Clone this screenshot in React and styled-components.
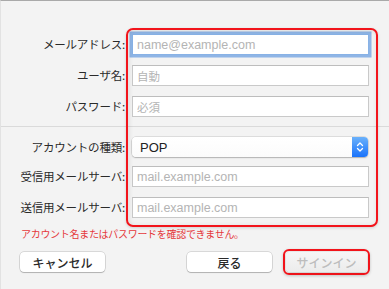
import React from 'react';
import styled, { createGlobalStyle, css } from 'styled-components';

const GlobalStyle = createGlobalStyle`
	html,
	body {
		margin: 0;
		padding: 0;
		background: #f3f3f3;
	}
	* {
		box-sizing: border-box;
	}
`;

const SheetStyles = styled.div`
	width: 389px;
	height: 289px;
	background: #f3f3f3;
	border-top: 1px solid #a9a9a9;
	border-left: 1px solid #e2e2e2;
	overflow: hidden;
	font-family: 'Noto Sans CJK JP', 'Liberation Sans', sans-serif;
	color: #2b2b2b;
`;

const Form = styled.div`
	display: grid;
	grid-template-columns: 127px 237px 1fr;
	column-gap: 5px;
	padding-top: 33px;
	margin-left: -1px;
`;

const Label = styled.div`
	grid-column: 1;
	grid-row: ${props => props.$row};
	text-align: right;
	padding-right: 2px;
	font-size: 11.5px;
	line-height: ${props => props.$h || 21}px;
	height: ${props => props.$h || 21}px;
	margin-bottom: ${props => props.$mb ?? 10}px;
	white-space: nowrap;
	color: #2a2a2a;
	letter-spacing: -0.2px;
`;

const TextInput = styled.input`
	grid-column: 2;
	grid-row: ${props => props.$row};
	height: 21px;
	width: 100%;
	margin: 0 0 ${props => props.$mb ?? 10}px;
	padding: 0 4px;
	border: 1px solid #c9c9c9;
	border-top-color: #bdbdbd;
	background: #fff;
	outline: none;
	font-size: ${props => (props.$cjk ? 11.5 : 12.5)}px;
	font-family: ${props =>
		props.$cjk ? "'Noto Sans CJK JP', sans-serif" : "'Liberation Sans', Arial, sans-serif"};
	&::placeholder {
		color: #b4b4b4;
	}
	${props =>
		props.$focused &&
		css`
			border-color: #88b2e6;
			box-shadow: 0 0 0 2.5px rgba(110, 160, 226, 0.75);
		`}
`;

const Separator = styled.div`
	grid-column: 1 / -1;
	grid-row: ${props => props.$row};
	height: 1px;
	margin: -1px 0 10px;
	background: #dadada;
`;

const Select = styled.div`
	grid-column: 2;
	grid-row: ${props => props.$row};
	height: 20px;
	margin-bottom: 9px;
	margin-right: 1px;
	display: flex;
	align-items: center;
	background: linear-gradient(#ffffff, #fbfbfb);
	border-radius: 4px;
	box-shadow: 0 0 0 0.5px rgba(0, 0, 0, 0.18), 0 1px 1.5px rgba(0, 0, 0, 0.2);
	font-family: 'Liberation Sans', Arial, sans-serif;
	font-size: 13px;
	color: #222;
	overflow: hidden;

	span {
		flex: 1;
		padding-left: 8px;
	}
`;

const Stepper = styled.div`
	width: 16px;
	height: 100%;
	display: flex;
	align-items: center;
	justify-content: center;
	background: linear-gradient(#6ab1fb, #1a73fb);
`;

const Highlight = styled.div`
	grid-column: 2;
	grid-row: 1 / 8;
	margin: -6px -9px -9px -6px;
	border: 2px solid #f2141b;
	border-radius: 7px;
	box-shadow: inset 1px 1px 5px rgba(0, 0, 0, 0.1), 0 1px 3px rgba(0, 0, 0, 0.15);
	pointer-events: none;
	z-index: 2;
`;

const ErrorText = styled.div`
	margin: 9px 0 0 20px;
	font-size: 10px;
	line-height: 14px;
	color: #e5383b;
	letter-spacing: -0.3px;
`;

const ButtonRow = styled.div`
	display: flex;
	align-items: center;
	margin-top: 8px;
	padding: 0 19px 0 19px;
`;

const Button = styled.div`
	width: ${props => props.$w || 85}px;
	height: 20px;
	display: flex;
	align-items: center;
	justify-content: center;
	background: #fff;
	border-radius: 4px;
	box-shadow: 0 0 0 0.5px rgba(0, 0, 0, 0.22), 0 1px 1px rgba(0, 0, 0, 0.18);
	font-size: 12px;
	font-weight: 500;
	color: #2a2a2a;
	${props =>
		props.$disabled &&
		css`
			background: linear-gradient(#f6f6f6, #ececec);
			color: #bdbdbd;
			box-shadow: 0 0 0 0.5px rgba(0, 0, 0, 0.08), 0 1px 2px rgba(0, 0, 0, 0.12);
		`}
`;

const Spacer = styled.div`
	flex: 1;
`;

const ButtonHighlight = styled.div`
	margin-left: 11px;
	padding: 1px;
	border: 2px solid #f2141b;
	border-radius: 6px;
	box-shadow: 0 1px 3px rgba(0, 0, 0, 0.2);
`;

const Chevrons = () => (
	<svg width="8" height="12" viewBox="0 0 8 12" fill="none" stroke="#fff" strokeWidth="1.3" strokeLinecap="round" strokeLinejoin="round">
		<polyline points="1.5,4.5 4,2 6.5,4.5" />
		<polyline points="1.5,7.5 4,10 6.5,7.5" />
	</svg>
);

const App = () => {
	return (
		<>
			<GlobalStyle />
			<SheetStyles>
				<Form>
					<Label $row={1}>メールアドレス:</Label>
					<TextInput $row={1} $focused placeholder="name@example.com" readOnly />
					<Label $row={2}>ユーザ名:</Label>
					<TextInput $row={2} $cjk placeholder="自動" readOnly />
					<Label $row={3}>パスワード:</Label>
					<TextInput $row={3} $cjk placeholder="必須" readOnly />
					<Separator $row={4} />
					<Label $row={5} $h={20} $mb={9}>アカウントの種類:</Label>
					<Select $row={5}>
						<span>POP</span>
						<Stepper>
							<Chevrons />
						</Stepper>
					</Select>
					<Label $row={6}>受信用メールサーバ:</Label>
					<TextInput $row={6} placeholder="mail.example.com" readOnly />
					<Label $row={7} $mb={0}>送信用メールサーバ:</Label>
					<TextInput $row={7} $mb={0} placeholder="mail.example.com" readOnly />
					<Highlight />
				</Form>
				<ErrorText>アカウント名またはパスワードを確認できません。</ErrorText>
				<ButtonRow>
					<Button>キャンセル</Button>
					<Spacer />
					<Button>戻る</Button>
					<ButtonHighlight>
						<Button $w={81} $disabled>サインイン</Button>
					</ButtonHighlight>
				</ButtonRow>
			</SheetStyles>
		</>
	);
};

export default App;
